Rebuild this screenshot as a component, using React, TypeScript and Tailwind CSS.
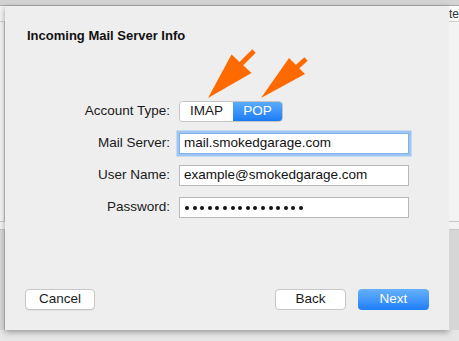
import React from "react";

const font = { fontFamily: '"Liberation Sans", Arial, Helvetica, sans-serif' };

function Label({ children }: { children: React.ReactNode }) {
  return (
    <div className="flex h-[21px] items-center justify-end text-[13.5px] text-[#1a1a1a]">{children}</div>
  );
}

function Field({ children, focus }: { children: React.ReactNode; focus?: boolean }) {
  return (
    <div
      className={
        "flex h-[21px] w-[230px] items-center bg-white pl-[4px] text-[13.5px] text-[#111] border " +
        (focus ? "border-[#7fb1ea] shadow-[0_0_0_2.5px_#9ec5f3]" : "border-[#b9b9b9]")
      }
    >
      {children}
    </div>
  );
}

export default function App() {
  const dots = Array.from({ length: 16 });
  return (
    <div className="relative h-[341px] w-[459px] overflow-hidden bg-[#e4e4e4]" style={font}>
      <div className="h-[6px] border-b border-[#a9a9a9] bg-[#d3d3d3]" />
      <div className="flex h-[324px]">
        {/* left strip */}
        <div className="flex w-[5px] flex-col bg-[#f3f3f3]">
          <div className="h-[16px] border-b border-[#cfcfcf]" />
          <div className="h-[199px] border-r border-[#c8c8c8]" />
          <div className="h-[9px] border-y border-[#c8c8c8]" />
          <div className="flex-1 border-r border-[#bdbdbd] bg-[#d9d9d9]" />
        </div>
        {/* sheet */}
        <div className="flex w-[444px] flex-col bg-[#eeeeee] shadow-[0_2px_6px_rgba(0,0,0,0.35)]">
          <div className="pl-[22px] pt-[22px] text-[13px] font-bold leading-[16px] text-[#111]">
            Incoming Mail Server Info
          </div>
          <div className="mt-[57px] grid grid-cols-[165px_230px] gap-x-[9px] gap-y-[11px]">
            <Label>Account Type:</Label>
            <div className="flex h-[21px] w-[104px] overflow-hidden rounded-[4px] border border-[#c4c4c4] text-[13.5px]">
              <div className="flex w-[53px] items-center justify-center bg-white text-[#1a1a1a]">IMAP</div>
              <div className="flex flex-1 items-center justify-center bg-gradient-to-b from-[#5aabfc] to-[#1a7cf4] text-white">
                POP
              </div>
            </div>
            <Label>Mail Server:</Label>
            <Field focus>mail.smokedgarage.com</Field>
            <Label>User Name:</Label>
            <Field>example@smokedgarage.com</Field>
            <Label>Password:</Label>
            <Field>
              <div className="flex gap-[3.6px] pl-[1px]">
                {dots.map((_, i) => (
                  <span key={i} className="block h-[4px] w-[4px] rounded-full bg-[#111]" />
                ))}
              </div>
            </Field>
          </div>
          <div className="mt-auto flex items-center px-[20px] pb-[20px] text-[13.5px]">
            <div className="flex h-[21px] w-[70px] items-center justify-center rounded-[4px] border border-[#c6c6c6] bg-white text-[#1a1a1a] shadow-[0_1px_0_rgba(0,0,0,0.05)]">
              Cancel
            </div>
            <div className="ml-auto flex h-[21px] w-[71px] items-center justify-center rounded-[4px] border border-[#c6c6c6] bg-white text-[#1a1a1a]">
              Back
            </div>
            <div className="ml-[12px] flex h-[21px] w-[71px] items-center justify-center rounded-[4px] bg-gradient-to-b from-[#64b0fc] to-[#1c7ef5] text-white">
              Next
            </div>
          </div>
        </div>
        {/* right strip */}
        <div className="flex flex-1 flex-col overflow-hidden bg-[#f3f3f3]">
          <div className="h-[16px] overflow-hidden border-b border-[#cfcfcf] bg-[#fafafa] pt-[1px] text-[12px] leading-[14px] text-[#333]">
            te
          </div>
          <div className="h-[199px]" />
          <div className="h-[9px] border-y border-[#c8c8c8]" />
          <div className="flex-1 bg-[#d6d6d6]" />
        </div>
      </div>
      <div className="h-[11px] bg-[#e6e6e6]" />

      {/* arrows overlay */}
      <svg className="pointer-events-none absolute left-0 top-0" width="459" height="341" viewBox="0 0 459 341">
        <line x1="254" y1="51" x2="240" y2="65" stroke="#ff6a00" strokeWidth="5" />
        <polygon points="231.5,54.5 251.5,73 208,98" fill="#ff6a00" />
        <line x1="306" y1="59" x2="295" y2="69" stroke="#ff6a00" strokeWidth="5" />
        <polygon points="289,58 305,74 261,98" fill="#ff6a00" />
      </svg>
    </div>
  );
}
